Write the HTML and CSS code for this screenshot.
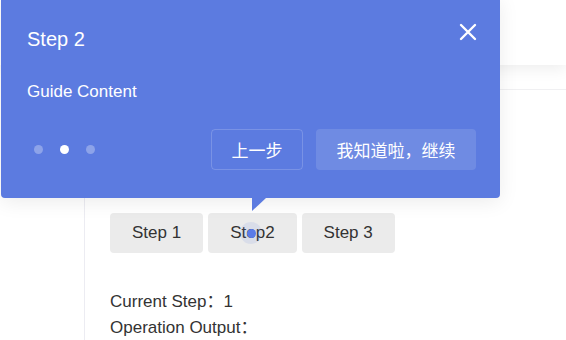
FILE: index.html
```html
<!DOCTYPE html>
<html>
<head>
<meta charset="utf-8">
<link rel="stylesheet" href="styles.css">
</head>
<body>
<div class="app">
  <header class="header"></header>
  <div class="body">
    <aside class="sidebar"></aside>
    <main class="main">
      <div class="subbar"></div>
      <div class="content">
        <div class="btns">
          <button class="btn">Step 1</button>
          <button class="btn">Step2</button>
          <button class="btn">Step 3</button>
        </div>
        <div class="info">
          <div>Current Step：1</div>
          <div>Operation Output：</div>
        </div>
      </div>
    </main>
  </div>
</div>

<div class="tour">
  <div class="tour-head">
    <div class="tour-title">Step 2</div>
    <svg class="close" width="18" height="18" viewBox="0 0 18 18"><path d="M2 2 L16 16 M16 2 L2 16" stroke="#fff" stroke-width="2.4" stroke-linecap="round"/></svg>
  </div>
  <div class="tour-desc">Guide Content</div>
  <div class="tour-foot">
    <div class="dots"><span class="dot"></span><span class="dot on"></span><span class="dot"></span></div>
    <div class="actions">
      <button class="tbtn ghost">上一步</button>
      <button class="tbtn primary">我知道啦，继续</button>
    </div>
  </div>
  <div class="arrow"></div>
</div>
<div class="cursor"><span></span></div>
</body>
</html>
```
FILE: styles.css
```css
html, body { margin: 0; padding: 0; }
body {
  width: 566px; height: 340px; overflow: hidden; position: relative;
  font-family: "Liberation Sans", Arial, "Noto Sans CJK SC", sans-serif;
  background: #fff; color: #333;
}
.app { display: flex; flex-direction: column; height: 340px; }
.header { height: 65px; background: #fff; box-shadow: 0 4px 14px rgba(0,0,0,0.07); position: relative; z-index: 1; flex: none; }
.body { display: flex; flex: 1; }
.sidebar { width: 84px; border-right: 1px solid #ececf2; flex: none; }
.main { flex: 1; display: flex; flex-direction: column; }
.subbar { height: 24px; border-bottom: 1px solid #f0f0f2; }
.content { padding: 123px 0 0 25px; }
.btns { display: flex; gap: 5px; }
.btn {
  height: 40px; padding: 0 22px; border: 0; border-radius: 4px; background: #ebebeb;
  font: 17px "Liberation Sans", Arial, sans-serif; color: #333;
}
.info { margin-top: 36px; font-size: 17px; line-height: 26px; color: #333; }

.tour {
  position: absolute; left: 1px; top: -4px; width: 499px; height: 202px;
  background: #5c7be0; border-radius: 4px; box-sizing: border-box;
  padding: 30px 24px 0 26px; color: #fff;
  box-shadow: 0 4px 20px rgba(0,0,0,0.08);
  z-index: 5;
}
.tour-head { display: flex; justify-content: space-between; align-items: center; height: 26px; }
.tour-title { font-size: 20px; }
.close { margin-right: -1px; margin-top: -14px; }
.tour-desc { margin-top: 30px; font-size: 17px; }
.tour-foot { display: flex; justify-content: space-between; align-items: center; margin-top: 27px; }
.dots { display: flex; gap: 17px; padding-left: 7px; }
.dot { width: 9px; height: 9px; border-radius: 50%; background: rgba(255,255,255,0.3); }
.dot.on { background: #fff; }
.actions { display: flex; gap: 13px; }
.tbtn {
  height: 41px; border-radius: 4px; font: 17px "Liberation Sans", Arial, "Noto Sans CJK SC", sans-serif;
  color: #fff; padding: 0;
}
.ghost { background: transparent; border: 1px solid rgba(255,255,255,0.18); width: 92px; }
.primary { background: rgba(255,255,255,0.12); border: 0; width: 160px; }
.arrow {
  position: absolute; left: 251px; top: 202px; width: 0; height: 0;
  border-top: 13px solid #5c7be0; border-right: 14px solid transparent;
}
.cursor {
  position: absolute; left: 240px; top: 222px; width: 22px; height: 22px; border-radius: 50%;
  background: rgba(92,123,224,0.12); display: flex; align-items: center; justify-content: center; z-index: 6;
}
.cursor span { flex: none; width: 9px; height: 9px; border-radius: 50%; background: #5b7be8; }
```
